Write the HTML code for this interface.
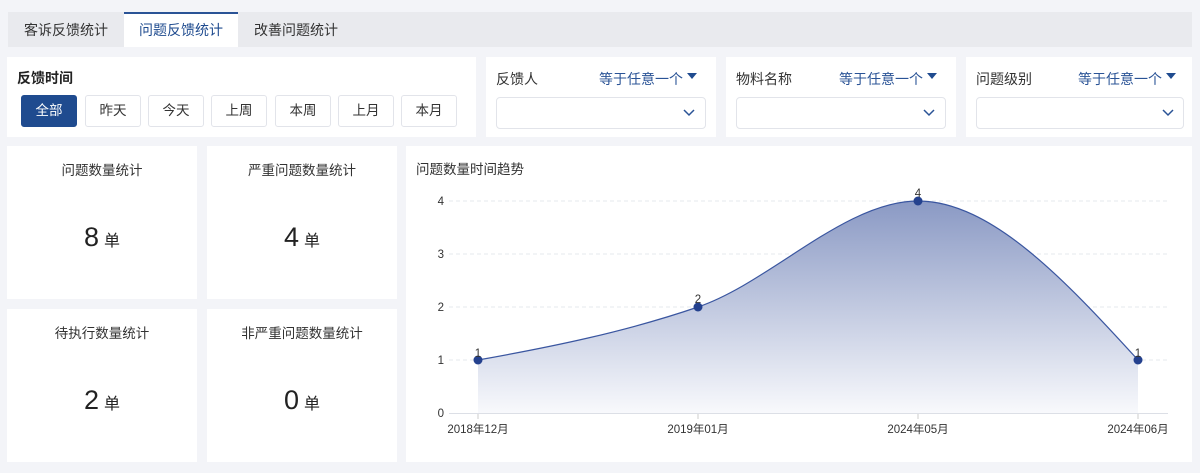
<!DOCTYPE html>
<html><head><meta charset="utf-8"><style>
*{margin:0;padding:0;box-sizing:border-box}
body{width:1200px;height:473px;background:#f3f4f8;font-family:"Liberation Sans","Noto Sans CJK SC",sans-serif;color:#333;position:relative;overflow:hidden}
.a{position:absolute}
.tabs{left:8px;top:12px;width:1184px;height:35px;background:#e9eaee}
.tab{position:absolute;top:0;height:35px;line-height:36px;font-size:14px;color:#333;text-align:center}
.tab.on{background:#fff;color:#1f4b8f;border-top:2px solid #2a5396;line-height:33px}
.panel{background:#fff}
.btn{position:absolute;top:95px;width:56px;height:32px;border:1px solid #e2e4ea;border-radius:3px;font-size:13.5px;text-align:center;line-height:30px;color:#333;background:#fff}
.btn.on{background:#1f4b8f;color:#fff;border-color:#1f4b8f}
.lbl{font-size:14px;color:#333}
.eq{font-size:14px;color:#2a5396}
.sel{position:absolute;height:32px;border:1px solid #e2e4ea;border-radius:4px}
.card .t{position:absolute;top:13px;width:100%;text-align:center;font-size:13.5px;color:#333}
.card .v{position:absolute;top:76px;width:100%;text-align:center;font-size:27px;color:#222}
.card .v span{font-size:16px;margin-left:5px}
</style></head><body>
<div class="a tabs">
<div class="tab" style="left:0;width:116px">客诉反馈统计</div>
<div class="tab on" style="left:116px;width:114px">问题反馈统计</div>
<div class="tab" style="left:230px;width:116px">改善问题统计</div>
</div>

<div class="a panel" style="left:7px;top:57px;width:469px;height:80px"></div>
<div class="a" style="left:17px;top:68px;font-size:14px;font-weight:bold;color:#222">反馈时间</div>
<div class="btn on" style="left:21px">全部</div>
<div class="btn" style="left:85px">昨天</div>
<div class="btn" style="left:148px">今天</div>
<div class="btn" style="left:211px">上周</div>
<div class="btn" style="left:275px">本周</div>
<div class="btn" style="left:338px">上月</div>
<div class="btn" style="left:401px">本月</div>

<div class="a panel" style="left:486px;top:57px;width:230px;height:80px"></div>
<div class="a panel" style="left:726px;top:57px;width:230px;height:80px"></div>
<div class="a panel" style="left:966px;top:57px;width:226px;height:80px"></div>
<div class="a lbl" style="left:496px;top:69px">反馈人</div>
<div class="a eq" style="left:599px;top:69px">等于任意一个</div>
<div class="sel" style="left:496px;top:97px;width:210px"></div>
<div class="a lbl" style="left:736px;top:69px">物料名称</div>
<div class="a eq" style="left:839px;top:69px">等于任意一个</div>
<div class="sel" style="left:736px;top:97px;width:210px"></div>
<div class="a lbl" style="left:976px;top:69px">问题级别</div>
<div class="a eq" style="left:1078px;top:69px">等于任意一个</div>
<div class="sel" style="left:976px;top:97px;width:208px"></div>
<svg class="a" style="left:0;top:0" width="1200" height="473">
<g fill="#1f4b8f"><path d="M687,73h10l-5,6z"/><path d="M927,73h10l-5,6z"/><path d="M1166,73h10l-5,6z"/></g>
<g fill="none" stroke="#2a5396" stroke-width="1.5"><path d="M684,110l5,5l5,-5"/><path d="M924,110l5,5l5,-5"/><path d="M1163,110l5,5l5,-5"/></g>
</svg>

<div class="a panel card" style="left:7px;top:146px;width:190px;height:153px"><div class="t">问题数量统计</div><div class="v">8<span>单</span></div></div>
<div class="a panel card" style="left:207px;top:146px;width:190px;height:153px"><div class="t">严重问题数量统计</div><div class="v">4<span>单</span></div></div>
<div class="a panel card" style="left:7px;top:309px;width:190px;height:153px"><div class="t">待执行数量统计</div><div class="v">2<span>单</span></div></div>
<div class="a panel card" style="left:207px;top:309px;width:190px;height:153px"><div class="t">非严重问题数量统计</div><div class="v">0<span>单</span></div></div>

<div class="a panel" style="left:406px;top:146px;width:786px;height:316px"></div>
<div class="a" style="left:416px;top:158px;font-size:13.5px;color:#333">问题数量时间趋势</div>
<svg class="a" style="left:0;top:0" width="1200" height="473" font-family="Liberation Sans, Noto Sans CJK SC, sans-serif" font-size="11.5" fill="#333">
<defs><linearGradient id="g" x1="0" y1="0" x2="0" y2="1"><stop offset="0" stop-color="#8a99c4"/><stop offset="1" stop-color="#f8f9fc"/></linearGradient></defs>
<g stroke="#e6e8ee" stroke-dasharray="4,3"><line x1="449" y1="201" x2="1168" y2="201"/><line x1="449" y1="254" x2="1168" y2="254"/><line x1="449" y1="307" x2="1168" y2="307"/><line x1="449" y1="360" x2="1168" y2="360"/></g>
<line x1="449" y1="413.5" x2="1168" y2="413.5" stroke="#dcdfe6"/>
<g stroke="#ccc"><line x1="478" y1="414" x2="478" y2="419"/><line x1="698" y1="414" x2="698" y2="419"/><line x1="918" y1="414" x2="918" y2="419"/><line x1="1138" y1="414" x2="1138" y2="419"/></g>
<path d="M478,360 C551,347 625,332 698,307 C771,282 845,201 918,201 C991,201 1065,280 1138,360 L1138,413 L478,413Z" fill="url(#g)"/>
<path d="M478,360 C551,347 625,332 698,307 C771,282 845,201 918,201 C991,201 1065,280 1138,360" fill="none" stroke="#3a56a0" stroke-width="1.2"/>
<g fill="#24418e"><circle cx="478" cy="360" r="4.5"/><circle cx="698" cy="307" r="4.5"/><circle cx="918" cy="201" r="4.5"/><circle cx="1138" cy="360" r="4.5"/></g>
<g text-anchor="middle"><text x="478" y="357">1</text><text x="698" y="303">2</text><text x="918" y="197">4</text><text x="1138" y="357">1</text></g>
<g text-anchor="end"><text x="444" y="205">4</text><text x="444" y="258">3</text><text x="444" y="311">2</text><text x="444" y="364">1</text><text x="444" y="417">0</text></g>
<g text-anchor="middle"><text x="478" y="433">2018年12月</text><text x="698" y="433">2019年01月</text><text x="918" y="433">2024年05月</text><text x="1138" y="433">2024年06月</text></g>
</svg>
</body></html>
